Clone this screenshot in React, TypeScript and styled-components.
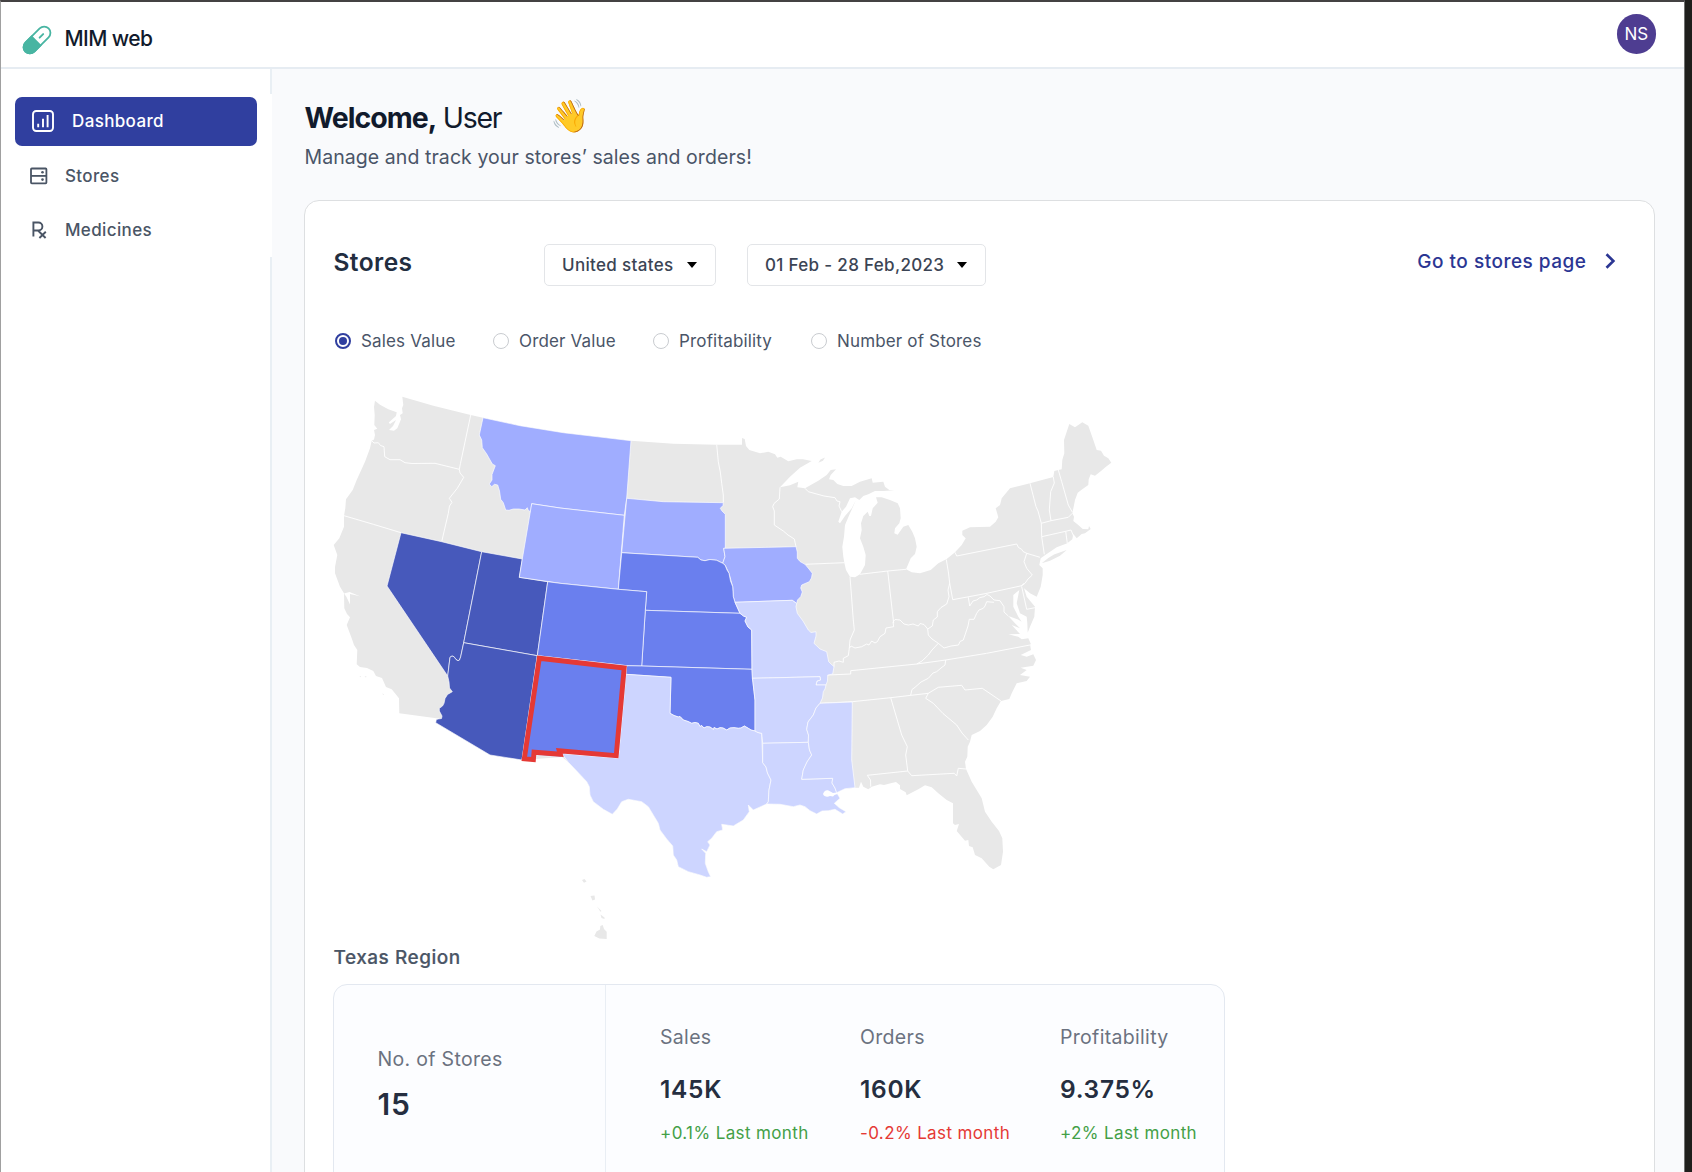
import React, { useState } from 'react';
import styled, { createGlobalStyle } from 'styled-components';

const GlobalStyle = createGlobalStyle`
  * { box-sizing: border-box; }
  html, body { margin: 0; padding: 0; overflow: hidden; }
  body { font-family: Inter, "Liberation Sans", sans-serif; background: #1f1f1c; }
  h1, h2, h3, p { margin: 0; }
  button { font-family: inherit; cursor: pointer; }
`;

const Window = styled.div`
  width: 1685px;
  height: 1172px;
  display: flex;
  flex-direction: column;
  overflow: hidden;
  background: #f9fafc;
  border-top: 2px solid #444243;
  border-left: 1px solid #a0a0a0;
  border-right: 1px solid #6f706f;
`;

const Header = styled.header`
  height: 67px;
  flex: none;
  display: flex;
  align-items: flex-start;
  justify-content: space-between;
  padding: 12px 28px 0 20.5px;
  background: #fff;
  border-bottom: 2px solid #e6ecf2;
`;

const Brand = styled.div`
  display: flex;
  align-items: center;
  gap: 13px;
  height: 48px;
  font-size: 21px;
  font-weight: 500;
  letter-spacing: -0.58px;
  color: #111a2c;
`;

const PillIcon = styled.svg`
  width: 30px;
  height: 30px;
  margin-top: 4px;
`;

const Avatar = styled.div`
  width: 39.5px;
  height: 39.5px;
  border-radius: 50%;
  background: #4e3d91;
  color: #fff;
  display: flex;
  align-items: center;
  justify-content: center;
  font-size: 17px;
`;

const Body = styled.div`
  flex: 1;
  display: flex;
  min-height: 0;
`;

const Sidebar = styled.aside`
  width: 271px;
  flex: none;
  padding-top: 25px;
  background: #fff;
  border-right: 2px solid #e9eff4;
`;

const Nav = styled.nav`
  height: 163px;
  margin-right: -2px;
  padding: 2.5px 15px 0 14px;
  background: #fff;
`;

const NavItem = styled.a<{ $active?: boolean }>`
  display: flex;
  align-items: center;
  height: ${(p) => (p.$active ? 49 : 54.3)}px;
  margin-bottom: ${(p) => (p.$active ? 3 : 0)}px;
  padding-left: ${(p) => (p.$active ? 16.5 : 14)}px;
  gap: ${(p) => (p.$active ? 18.5 : 16)}px;
  border-radius: 7px;
  background: ${(p) => (p.$active ? '#303f9f' : 'transparent')};
  color: ${(p) => (p.$active ? '#fff' : '#4a5565')};
  font-size: 17px;
  font-weight: 500;
  letter-spacing: 0.36px;
  cursor: pointer;
`;

const NavIcon = styled.svg<{ $size: number }>`
  width: ${(p) => p.$size}px;
  height: ${(p) => p.$size}px;
  flex: none;
  fill: none;
  stroke: currentColor;
`;

const Main = styled.main`
  flex: 1;
  padding: 28px 29px 0 32px;
  min-width: 0;
`;

const Greeting = styled.h1`
  display: flex;
  align-items: center;
  height: 40px;
  padding-left: 0.5px;
  font-size: 28.5px;
  font-weight: 700;
  letter-spacing: -0.98px;
  color: #111a2c;
  white-space: pre;
`;

const UserName = styled.span`
  margin-left: 1.5px;
  font-weight: 400;
  letter-spacing: -1.25px;
`;

const Wave = styled.span`
  margin: -3px 0 0 49px;
  font-size: 32px;
  line-height: 36px;
  letter-spacing: 0;
  font-weight: 400;
`;

const Subtitle = styled.p`
  height: 28px;
  margin: 5.5px 0 29.5px 0.5px;
  font-size: 19.5px;
  line-height: 28px;
  letter-spacing: 0.07px;
  color: #4a5568;
`;

const Card = styled.section`
  height: 1100px;
  padding: 43px 37px 0 28px;
  background: #fff;
  border: 1.4px solid #dddfe1;
  border-radius: 15px;
`;

const CardHeader = styled.div`
  display: flex;
  align-items: flex-start;
  height: 42px;
`;

const CardTitle = styled.h2`
  width: 210.5px;
  padding-left: 0.5px;
  font-size: 24.5px;
  font-weight: 600;
  line-height: 36px;
  letter-spacing: 0.42px;
  color: #222d3f;
`;

const SelectButton = styled.button<{ $width: number }>`
  display: flex;
  align-items: center;
  justify-content: space-between;
  width: ${(p) => p.$width}px;
  height: 42px;
  margin-right: 31px;
  padding: 0 17.5px;
  background: #fff;
  border: 1.4px solid #e3e5e8;
  border-radius: 5px;
  font-size: 17px;
  font-weight: 500;
  letter-spacing: 0.33px;
  color: #3b4454;
  white-space: nowrap;
`;

const Caret = styled.span`
  border: 5.5px solid transparent;
  border-top: 6px solid #000;
  border-bottom: 0;
`;

const StoresLink = styled.a`
  display: flex;
  align-items: center;
  gap: 16.5px;
  height: 34px;
  margin-left: auto;
  font-size: 19px;
  font-weight: 500;
  letter-spacing: 0.5px;
  color: #2b3693;
  cursor: pointer;
`;

const Metrics = styled.div`
  display: grid;
  grid-template-columns: 158px 160px 158px auto;
  justify-content: start;
  height: 20px;
  margin: 45px 0 29px 1.5px;
`;

const Metric = styled.label`
  display: flex;
  align-items: center;
  gap: 10.5px;
  font-size: 17px;
  letter-spacing: 0.16px;
  color: #4a5568;
  white-space: nowrap;
  cursor: pointer;
`;

const Radio = styled.span<{ $checked: boolean }>`
  display: flex;
  align-items: center;
  justify-content: center;
  width: 16px;
  height: 16px;
  border-radius: 50%;
  border: ${(p) => (p.$checked ? '2px solid #303f9f' : '1.3px solid #c9ccd0')};
  &::after {
    content: '';
    width: 8px;
    height: 8px;
    border-radius: 50%;
    background: ${(p) => (p.$checked ? '#303f9f' : 'transparent')};
  }
`;

const MapSvg = styled.svg`
  display: block;
  width: 800px;
  height: 566px;
  margin-left: -13px;
`;

const RegionTitle = styled.h3`
  height: 38px;
  padding-left: 0.5px;
  font-size: 19px;
  font-weight: 500;
  line-height: 24px;
  letter-spacing: 0.52px;
  color: #4a5565;
  -webkit-text-stroke: 0.2px #4a5565;
`;

const Panel = styled.div`
  display: grid;
  grid-template-columns: 272px 1fr;
  width: 892px;
  height: 240px;
  background: #fcfdff;
  border: 1.4px solid #e3e8f0;
  border-radius: 14px;
`;

const StoreCount = styled.div`
  padding: 59.5px 0 0 43.5px;
  border-right: 1.4px solid #e9eef4;
`;

const StatGrid = styled.div`
  display: grid;
  grid-template-columns: repeat(3, 200px);
  padding: 37.5px 0 0 54px;
`;

const StatLabel = styled.p`
  font-size: 19.5px;
  line-height: 28px;
  letter-spacing: 0.32px;
  color: #6b7280;
`;

const StoreTotal = styled.p`
  margin-top: 13px;
  font-size: 30px;
  font-weight: 600;
  line-height: 36px;
  letter-spacing: 0.7px;
  color: #252e40;
`;

const StatValue = styled.p`
  margin: 22.5px 0 15.5px;
  font-size: 24.5px;
  font-weight: 600;
  line-height: 32px;
  letter-spacing: 0.7px;
  color: #252e40;
`;

const StatDelta = styled.p<{ $down?: boolean }>`
  font-size: 17px;
  line-height: 24px;
  letter-spacing: 0.38px;
  white-space: nowrap;
  color: ${(p) => (p.$down ? '#e53935' : '#43a047')};
`;

type Level = 'gray' | 'light' | 'soft' | 'medium' | 'dark';

const FILL: Record<Level, string> = {
  gray: '#e8e8e8',
  light: '#cdd5ff',
  soft: '#a0adff',
  medium: '#6a7fee',
  dark: '#4759bb',
};

const COUNTRY =
  '375,400.7 374,406.7 374.7,415 374.3,425 377.3,428.7 374,430 375,435 374,439.5 371.7,440.7 370,448.3 365,461.7 356.7,480 352.7,490 346,499.3 345.3,508.3 344,515.7 344,526.7 339.3,538.3 333.7,545 337.3,555 335,567 335,573.3 340,586.7 344,593.3 344.3,608.3 347,614 350,617.3 346.7,625 351.7,638.3 354,645 357.3,650 356.7,664.3 360,667 367,668 373.3,671 376,676 382,678 386,687 391.7,689.3 399,698.3 399.3,713.3 440,718.7 435.7,722.7 490,755 522,760 562,757 568.3,762.3 576.7,771 586.7,781.7 589.3,786.7 590,795 593.3,801.7 603.3,809.3 612.3,814.3 617.3,809 621.7,801.7 628.3,799.3 641.7,801.7 648.3,806.7 653.3,815 658.3,823.3 660,830 666.7,839 672.7,846 673.3,855 676.7,860 678.3,866.7 688.3,871.7 700,875 706.7,877.3 710.7,876.7 708.3,871.7 705.3,863.3 705.7,853.3 701.7,849 706.7,851.7 710,845 707.7,841.7 711.7,838.3 716.7,831.7 722.7,830 721.7,824.3 733.3,826 743.3,820 749.3,811.7 748.3,805 753.3,810 766.7,804 780,804.3 793.3,806.7 800,805 805,806.7 810,810.7 816.7,814 822,811 828.3,810.7 835,809.3 842.7,814 846,811.7 839.3,807.7 834.3,803.3 840,798.3 836,792.3 845,788.7 855,787.7 859,787.7 861,781.7 863.3,786.7 868.3,789.3 871.7,786.7 880,784.3 884,785 890.7,783.3 896,782 900,785.3 900,789 905.7,792.3 906.7,795.3 918.3,789.3 925,785.3 931.7,787.3 938.3,793.3 946.7,800 953,803.3 953,823.3 955,825 959,824 956.7,831 965,840.7 968.3,840 969,846 972.7,847.3 975,855 981.7,858.3 989.3,866.7 993.3,869.3 1001,865 1003,851.7 1002.3,838.3 999,831 991.7,821.7 985,811.7 981.7,798.3 971.7,781.7 966,769 965,761.7 967.3,756.7 967.7,746.7 970,741.7 971.7,735 980,731 986.7,725 992.7,716.7 996.7,708.3 1001,701 1009.3,699 1011.7,693.3 1016.7,683.3 1026.7,681 1030,676.7 1020,675 1026.7,670 1020.7,667.7 1033.3,665.7 1036,660 1033.3,654.3 1026.7,656.7 1020.7,655 1031,650 1030,644.3 1031,644.3 1028.3,638.3 1021.7,639.3 1018.3,636.7 1008.3,634.3 1020,634 1011.7,625 1020,628.3 1015,623.3 1008.3,616 1018,619.5 1021.7,621.7 1018.3,616.7 1013.3,606.7 1013.3,595 1019.3,590 1016.7,603.3 1020,613.3 1026.7,616.7 1027.3,623.3 1027.7,632.7 1030,626.7 1034.3,616.7 1035,606.7 1030,600.7 1026.7,596.7 1024,588.3 1030,593.3 1036.7,596.7 1040.7,586.7 1042.7,575 1042.7,568.3 1039.3,565 1040.7,558.3 1046.7,554 1056.7,547.3 1067.3,543.3 1072.3,539.3 1073.3,534 1076.7,538.3 1081.7,534 1085,533.3 1090.7,529 1089,526 1088.3,529.3 1082.7,529 1078.3,525 1073.3,521 1074,516.7 1072.3,513.3 1073.7,506.7 1075,500 1077.7,492.7 1082.3,489.3 1088.3,485 1088.7,479.3 1090.7,474.3 1095,475.7 1101,471 1106,466.7 1111.3,462.7 1108.3,458.3 1104,455.7 1101,450.7 1096.7,450 1092.7,438.3 1088.3,425.7 1082.3,422.3 1075,427.3 1069.3,424 1064,440 1064.3,453.3 1062.3,460 1061.7,469.3 1058.3,470 1054.3,471 1053.3,477 1030,483.3 1010,488.3 1001.7,498.3 1000,505 995.7,508.3 998.3,517.3 995.7,521.7 990,526.7 970,527.3 962.3,530.7 962.3,535 965.7,538.3 961.7,545 955,552.3 946.7,559 938.3,563.3 930.7,570 920,573.3 911.7,572.3 906,569.3 908.3,564 910.7,558.3 915,554 916.7,546.7 915,538.3 912.3,531.7 908.3,525 903.3,526.7 897.7,534.7 894.3,533.3 895,528.3 899.3,523.3 900.7,518.3 900,508.3 897.7,503.3 890,500 881.7,497.3 876,497.3 877.7,502.7 872.7,508.3 871,516 869.3,516 867.7,511.7 863.3,516 861,523.3 861.7,530 860,538.3 863.3,546.7 865.7,555 865,565 860,574.3 855,577.3 850,576.7 846,570 844.3,562.7 843.3,556.7 842.3,546.7 844,536.7 845,525 850,513.3 856,500 851.7,508.3 845,516 840,523.3 838.3,521.7 841.7,511.7 846,506.7 850,498.3 855,497.3 859.3,500 863.3,496 868.3,494.3 875,491 883.3,491 894.3,490.3 889.3,490 885,486.7 883.3,481.7 872.7,482.7 871.7,478.3 860,481.7 851.7,486 843.3,486 837.3,484 833.3,480 829,479.3 830.7,475 836,469.3 830.7,470 826.7,475 818.3,480.7 805,488.3 797.3,487.3 798.3,481.7 790,485.3 780,487.3 790,476.7 800,467.7 811.7,461 803,459.3 796.7,459.3 788.3,461.3 780.7,456.7 777.3,457.7 775,454.3 768.3,451.7 760,453.3 749.3,450 746,446 744.7,439 742,438 742,444.7 716.7,444.7 673.3,443.7 631,440.7 600,437 563.3,432.7 520,425.7 483,417.7 470.7,415 433.3,405.7 402.3,396.7 403.3,405 402,408.3 402.7,413.3 400,415 401,419.3 400,421.7 397.3,428.3 394,430.7 389,430 393,426 396,420 390,424 388.7,422.5 396,416 396.7,412.3 388.3,409.3 380,404.7';

const STATES: { id: string; level: Level; points: string }[] = [
  { id: 'NV', level: 'dark', points: '401,532.7 441.7,541.7 481.7,551.7 463.7,642.7 460.7,656.7 459.5,660 458,660.7 456,659.5 454,656.7 452,656 450,657.3 447.7,676 387,586' },
  { id: 'UT', level: 'dark', points: '481.7,551.7 522.3,559 519.3,577.3 547.7,581.7 537.3,655.7 463.7,642.7' },
  { id: 'AZ', level: 'dark', points: '463.7,642.7 537.3,655.7 522,760 490,755 435.7,722.7 436.3,719.5 438.3,719 441.5,718.5 442,716 439.3,711 439.3,708.3 442.5,706 444,703.3 445,698.5 447.5,694.5 452.3,691.7 449.5,688 449,682 447.7,676 450,657.3 452,656 454,656.7 456,659.5 458,660.7 459.5,660 460.7,656.7' },
  { id: 'MT', level: 'soft', points: '483,417.7 520,425.7 563.3,432.7 600,437 631,440.7 626.7,498.3 624.3,515.3 560,508 531.7,503.7 530.7,511.7 528.3,510.5 527.3,507.7 525,510 519,509 513.3,509 509,510.3 505.7,510 503.3,502.7 500.7,499.3 499.5,491 497.7,485 494.5,484.3 491.7,486.7 489.3,484 492,480 492,474.5 495.3,465.7 492.3,464 486.7,454 482.3,447.7 481.7,440 479.3,435' },
  { id: 'WY', level: 'soft', points: '531.7,503.7 560,508 624.3,515.3 618.3,589.3 560,583.3 519.3,577.3 522.3,559' },
  { id: 'SD', level: 'soft', points: '626.7,498.3 663.3,501.7 723.3,502.7 723,505.5 720.3,508.3 722,511 725.3,514.3 725.3,548.3 723.7,548.3 725,556.7 722.7,563.3 716.7,560.3 710,559.5 705,560.7 701,560 697.7,557.3 621.7,552.7' },
  { id: 'IA', level: 'soft', points: '723.7,548.3 796,546.7 797.3,552 797.3,558.3 800,561.5 805,564.3 809,569 812.3,573.3 811.5,578 809.3,581.7 801.7,585 800.7,588 802.3,592 800.7,596.7 797.5,600 796.7,603.5 792.3,600.3 735,602.3 733.3,596.7 732.7,586.7 729,573.3 725,565 722.7,563.3 725,556.7' },
  { id: 'NE', level: 'medium', points: '621.7,552.7 697.7,557.3 701,560 705,560.7 710,559.5 716.7,560.3 722.7,563.3 725,565 727,570 729,573.3 730.5,581 732.7,586.7 733.3,596.7 735,602.3 740,613.3 645.3,610.3 646.7,591.7 618.3,589.3' },
  { id: 'KS', level: 'medium', points: '645.3,610.3 740,613.3 743.5,616 746.7,617.3 745,621 748,627 751.7,630 752,669.3 641.7,666' },
  { id: 'CO', level: 'medium', points: '547.7,581.7 560,583.3 618.3,589.3 646.7,591.7 645.3,610.3 641.7,666 626.7,665.7 537.3,655.7' },
  { id: 'OK', level: 'medium', points: '626.7,665.7 641.7,666 752,669.3 752.7,680 755,700 755,731 751,730 748.3,728.3 744.3,726 741,728 738.3,728.3 734,727.7 730,728 726.7,730 723,728 720,727.7 717,729 714,727.5 713.5,729.5 710,727 706.7,726.7 704,728 701.7,725.5 700,726.5 698.3,723.3 695,722.5 691.7,723.3 688,721.5 683.3,720 680,716.5 678.3,717 674,715.5 670,713.3 671,677.3 625.7,674.3' },
  { id: 'TX', level: 'light', points: '625.7,674.3 671,677.3 670,713.3 674,715.5 678.3,717 680,716.5 683.3,720 688,721.5 691.7,723.3 695,722.5 698.3,723.3 700,726.5 701.7,725.5 704,728 706.7,726.7 710,727 713.5,729.5 714,727.5 717,729 720,727.7 723,728 726.7,730 730,728 734,727.7 738.3,728.3 741,728 744.3,726 748.3,728.3 751,730 755,731 758,732.5 761.7,733.3 762.7,762.7 766,767 767.5,773 771,780 769,790 768.3,801.7 766.7,804 753.3,810 748.3,805 749.3,811.7 743.3,820 733.3,826 721.7,824.3 722.7,830 716.7,831.7 711.7,838.3 707.7,841.7 710,845 706.7,851.7 701.7,849 705.7,853.3 705.3,863.3 708.3,871.7 710.7,876.7 706.7,877.3 700,875 688.3,871.7 678.3,866.7 676.7,860 673.3,855 672.7,846 666.7,839 660,830 658.3,823.3 653.3,815 648.3,806.7 641.7,801.7 628.3,799.3 621.7,801.7 617.3,809 612.3,814.3 603.3,809.3 593.3,801.7 590,795 589.3,786.7 586.7,781.7 576.7,771 568.3,762.3 561.7,753.5 618.3,758' },
  { id: 'MO', level: 'light', points: '735,602.3 792.3,600.3 796.7,603.5 796,606.7 797.3,613.3 803,621 808.3,630 811,632.5 816,631.7 816,636 814,643.3 820,649 826.7,651.7 828.7,661.7 831,664 834,666.7 832.7,674 827.7,675 827.5,681 826,685 816,685 817,681 820.5,680 820,676.7 752.3,678.3 752,669.3 751.7,630 748,627 745,621 746.7,617.3 743.5,616 740,613.3' },
  { id: 'AR', level: 'light', points: '752.3,678.3 820,676.7 820.5,680 817,681 816,685 826,685 825,689 823.3,691.7 822.5,698 820,703.3 816,708 813.3,715 808,722 806.7,729.3 808.5,735 808.3,742.3 762.7,743.3 761.7,733.3 758,732.5 755,731 755,700 752.7,680' },
  { id: 'LA', level: 'light', points: '762.7,743.3 808.3,742.3 809.5,750 811.7,755 807,762 803.3,770 801.7,779.3 832.7,778.3 832,783 835,788 836.7,792.7 840,798.3 834.3,803.3 839.3,807.7 846,811.7 842.7,814 835,809.3 828.3,810.7 822,811 816.7,814 810,810.7 805,806.7 800,805 793.3,806.7 780,804.3 766.7,804 768.3,801.7 769,790 771,780 767.5,773 766,767 762.7,762.7' },
  { id: 'MS', level: 'light', points: '820,703.3 852.3,702 851.7,760 855,787.7 845,788.7 836.7,792.7 835,788 832,783 832.7,778.3 801.7,779.3 803.3,770 807,762 811.7,755 809.5,750 808.3,742.3 808.5,735 806.7,729.3 808,722 813.3,715 816,708' },
  { id: 'NM', level: 'medium', points: '537.3,655.7 626.7,665.7 618.3,758 562,753.3 561.5,757 535.5,755 535,761.5 522,760' },
];

const BORDERS = [
  '371.7,440.7 374,443 378.3,442.7 380.5,445.5 384,446.7 384.7,456.7 390,459.7 400,459.7 405,462.7 412,463.5 435,463.3 459.3,469.3',
  '470.7,415 463.3,450 460.5,463.3 459.3,469.3 460,473 463.7,477.3 457.3,488.3 449.3,498.3 452,502.3 449.5,506 448.3,513.3 441.7,541.7',
  '344,515.7 373.3,524.3 401,532.7',
  '716.7,444.7 718.3,461.7 720.3,472 721.7,483.3 723.3,495 723.3,502.7',
  '780,487.3 779.3,499 774,503.5 772.7,506.7 774.3,511 774.3,525 783.3,531 788,535 794.3,539 796,546.7',
  '805,488.3 808.3,491.7 824,496 835,497.7 837,501 840,501.7 839,506 841.7,511.7',
  '805,564.3 844.3,562.7',
  '850,576.7 853.3,620 854.3,630 850,640 849.3,648.3',
  '887.7,571 893.7,623.3',
  '860,574.3 887.7,571 906,569.3',
  '834,666.7 834,662.3 839,661 843.3,662.3 843.3,658.3 848.3,655.7 849.3,648.3 851,646 855,648 861.7,646.7 866.7,644 869,645 871.7,641 875,643 877.3,641.7 880,636.7 885,633.3 886,628 893.7,626.7 893,622 895,619.5 900,620 904,624 908.3,625 913,624 918.3,626 920,623.5 924,624.5 927.7,629 932.3,626 933.3,620 937.3,617 937.3,611.7 941,607.5 946.7,604 949,596.7 948,590 949.7,583.3 948.5,573 946.3,559.5',
  '949.7,583.3 952.7,599.7 985,593.7 1021.7,585.7 1024,583.5',
  '955,552.3 956.7,556 1016.7,544 1018.5,547.5 1021.7,549.3 1023,551.5 1026.7,553.3 1040,557.3',
  '1026.7,553.3 1024,561.7 1026.7,568.3 1032.3,575 1028,579 1025,583.3 1021,586',
  '1030,483.3 1036,506.7 1038,511 1041.3,523.3 1041.7,536.7 1044.3,554.3',
  '1053.3,477 1054.3,483 1050.7,491.7 1049.3,510 1051,520.7',
  '1058.3,470 1061.7,481.7 1068.3,505 1072.3,512',
  '1041.3,523.3 1051,520.7 1068.3,517.3 1072.3,513.3',
  '1041.7,536.7 1065.7,531.3 1071,530 1073.5,536',
  '1065.7,531.3 1067.3,543.3',
  '1021.7,586.7 1026.7,609.3 1035,607.7',
  '968.3,597.3 969.7,606 973,601 976.7,600 980,597.5 984,596.7 987,594.5 990,596 994,600 1000,600.7 1004,606.7 1004,612 1008.3,616',
  '994,602.3 986.7,601.7 985,606 983.3,608.3 979,610 976.7,613.3 974,619.3 969.3,619.3 968,626 963.3,640 960,641.5 958.5,645 951,646 944,648 938.3,643.3 932,639 928.3,635 927.7,629',
  '938.3,643.3 932,650 928.3,655 922,661 916.7,664',
  '827.7,675 850.7,674 850.7,670.7 916.7,664 945.7,660 986.7,653.3 1030,645',
  '945.7,660 945,665 941,668 936.7,671.7 933,673 928.3,678.3 921,682 915,687.3 912,689.5 910.7,695',
  '820,703.3 852.3,701.7 890.7,697.7 928.3,693.3 938.3,687.3 961.7,685.3 965,690 982.3,688.3 1001,701',
  '928.3,693.3 925.7,698.3 933.3,703.3 943,713.5 956.7,725 962,733 968.3,740',
  '890.7,697.7 901.7,735 907.3,746.7 905.7,755 907.7,771 911.7,775.7 954.3,773.3 956.7,776 958.3,768.3 966,769',
  '907.7,771 867.3,775.3 870.5,780 870.7,786.7',
];

const ISLANDS = [
  '582,880 584.5,879 586.5,881.5 584,882.8',
  '590.5,896 594.5,895.5 595,899.5 592.5,900.5',
  '597,906.5 601.5,911 600.5,911.8',
  '600.5,914.5 604.5,917.5 604.5,919 601.5,918',
  '594.3,936 596.5,931.5 600,929.5 600.3,926 602.7,925 604,929 606.7,931.7 606.7,939 599.3,938.5',
  '818.3,462.7 820.5,459.5 825,457.5 823,460.7',
  '1041.7,563.3 1048.3,558 1054,554.5 1066.7,550 1060,555.7 1050,560.7',
  '359.5,676 361,676.3 360.5,677.3',
  '364.5,676.5 366.5,676.2 366,677.5',
  '382.5,693.3 384,694.5 383,695',
];

function UsMap() {
  return (
    <MapSvg viewBox="320 380 800 566" role="img" aria-label="Sales by state">
      <polygon points={COUNTRY} fill={FILL.gray} />
      <g fill="none" stroke="#fff" strokeWidth="0.9" strokeLinejoin="round">
        {BORDERS.map((points) => (
          <polyline key={points} points={points} />
        ))}
      </g>
      <g stroke="#fff" strokeWidth="0.65" strokeLinejoin="round">
        {STATES.map((s) => (
          <polygon key={s.id} points={s.points} fill={FILL[s.level]} />
        ))}
      </g>
      <g fill="#fff">
        <path d="M823 794c1-3 3-4.3 5.5-3.5l4.500 2.500 3.500-.5 1 1.500-3 1-1.500 1.500-3-.5c-3 1.500-6 .5-7-2z" />
        <path d="M344 593.500l5.500-1.500 10.500 4.300-10-2.300 0 2 0 8.500-3.500-7.500z" />
      </g>
      <g fill={FILL.gray}>
        {ISLANDS.map((points) => (
          <polygon key={points} points={points} />
        ))}
      </g>
      <polygon
        points="539.3,658.2 624.2,668 616.2,755.6 559.3,750.8 560.3,754.2 534,752.2 533.4,759.6 524.3,758.8"
        fill="none"
        stroke="#e53935"
        strokeWidth="4.9"
      />
    </MapSvg>
  );
}

const METRICS = ['Sales Value', 'Order Value', 'Profitability', 'Number of Stores'];

const STATS = [
  { label: 'Sales', value: '145K', delta: '+0.1% Last month', down: false },
  { label: 'Orders', value: '160K', delta: '-0.2% Last month', down: true },
  { label: 'Profitability', value: '9.375%', delta: '+2% Last month', down: false },
];

export default function App() {
  const [metric, setMetric] = useState(METRICS[0]);
  return (
    <>
      <GlobalStyle />
      <Window>
        <Header>
          <Brand>
            <PillIcon viewBox="0 0 30 30">
              <g transform="rotate(-45 15 15)">
                <rect x="-1.4" y="8.7" width="32.8" height="12.6" rx="6.3" fill="#fff" stroke="#48b5a2" strokeWidth="1.8" />
                <path d="M14.5 7.8H4.9a7.2 7.2 0 0 0 0 14.4h9.6z" fill="#48b5a2" />
                <path d="M18.5 15.2h5" stroke="#48b5a2" strokeWidth="1.9" strokeLinecap="round" />
              </g>
            </PillIcon>
            MIM web
          </Brand>
          <Avatar>NS</Avatar>
        </Header>
        <Body>
          <Sidebar>
            <Nav>
              <NavItem $active>
                <NavIcon $size={22} viewBox="0 0 22 22" strokeWidth="1.9">
                  <rect x="1" y="1" width="20" height="20" rx="3.2" />
                  <path d="M6.2 17.200v-3.400M11 17.200V8.800M15.600 17.200V5" />
                </NavIcon>
                Dashboard
              </NavItem>
              <NavItem>
                <NavIcon $size={20} viewBox="0 0 20 20" strokeWidth="1.8">
                  <rect x="2" y="2.5" width="15.4" height="14.8" rx="0.8" />
                  <path d="M2 9.9h15.4" />
                  <circle cx="13.5" cy="6.2" r="1.3" fill="currentColor" stroke="none" />
                  <circle cx="13.5" cy="13.6" r="1.3" fill="currentColor" stroke="none" />
                </NavIcon>
                Stores
              </NavItem>
              <NavItem>
                <NavIcon $size={20} viewBox="0 0 20 20" strokeWidth="1.9">
                  <path d="M4.400 16.500V2.500h5a4 4 0 0 1 0 8H4.400M9 10.500l7.600 7.500M16.800 11.800l-6.400 6.200" />
                </NavIcon>
                Medicines
              </NavItem>
            </Nav>
          </Sidebar>
          <Main>
            <Greeting>
              Welcome, <UserName>User</UserName>
              <Wave>👋</Wave>
            </Greeting>
            <Subtitle>Manage and track your stores’ sales and orders!</Subtitle>
            <Card>
              <CardHeader>
                <CardTitle>Stores</CardTitle>
                <SelectButton $width={172}>
                  United states
                  <Caret />
                </SelectButton>
                <SelectButton $width={239}>
                  01 Feb - 28 Feb,2023
                  <Caret />
                </SelectButton>
                <StoresLink>
                  Go to stores page
                  <svg width="14" height="16" viewBox="0 0 14 16" fill="none" stroke="currentColor" strokeWidth="2.6">
                    <path d="M3.500 1.200L10.400 8l-6.900 6.800" />
                  </svg>
                </StoresLink>
              </CardHeader>
              <Metrics>
                {METRICS.map((m) => (
                  <Metric key={m} onClick={() => setMetric(m)}>
                    <Radio $checked={m === metric} />
                    {m}
                  </Metric>
                ))}
              </Metrics>
              <UsMap />
              <RegionTitle>Texas Region</RegionTitle>
              <Panel>
                <StoreCount>
                  <StatLabel>No. of Stores</StatLabel>
                  <StoreTotal>15</StoreTotal>
                </StoreCount>
                <StatGrid>
                  {STATS.map((s) => (
                    <div key={s.label}>
                      <StatLabel>{s.label}</StatLabel>
                      <StatValue>{s.value}</StatValue>
                      <StatDelta $down={s.down}>{s.delta}</StatDelta>
                    </div>
                  ))}
                </StatGrid>
              </Panel>
            </Card>
          </Main>
        </Body>
      </Window>
    </>
  );
}
